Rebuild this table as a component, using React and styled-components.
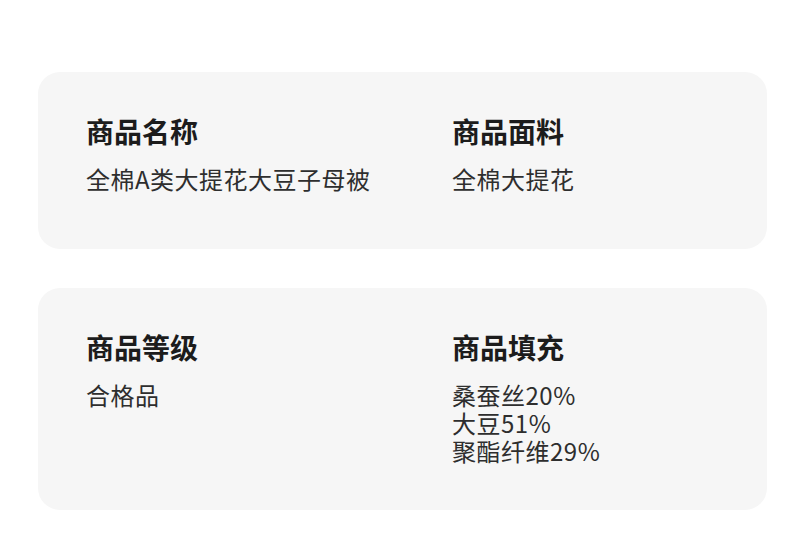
import React from 'react'
import styled, { createGlobalStyle } from 'styled-components'

const GlobalStyle = createGlobalStyle`
  html, body {
    margin: 0;
    padding: 0;
    background: #ffffff;
  }
  body {
    font-family: "Noto Sans CJK SC", "Noto Sans", sans-serif;
  }
`

const Page = styled.main`
  width: 790px;
  padding: 72px 23px 28px 38px;
  box-sizing: border-box;
  display: flex;
  flex-direction: column;
  gap: 39px;
`

const Card = styled.section`
  background: #f6f6f6;
  border-radius: 22px;
  padding: 39px 48px 45px;
  min-height: ${(props) => props.minHeight || 0}px;
  box-sizing: border-box;
  display: grid;
  grid-template-columns: 366px 1fr;
`

const Field = styled.div`
  display: flex;
  flex-direction: column;
  gap: 14px;
`

const Label = styled.h3`
  margin: 0;
  font-size: 28px;
  line-height: 40px;
  font-weight: 700;
  color: #1c1c1c;
`

const Value = styled.div`
  font-size: 24px;
  line-height: 28px;
  letter-spacing: 0.5px;
  color: #2e2e2e;
`

const cards = [
  {
    minHeight: 177,
    fields: [
      { label: '商品名称', value: ['全棉A类大提花大豆子母被'] },
      { label: '商品面料', value: ['全棉大提花'] },
    ],
  },
  {
    minHeight: 222,
    fields: [
      { label: '商品等级', value: ['合格品'] },
      { label: '商品填充', value: ['桑蚕丝20%', '大豆51%', '聚酯纤维29%'] },
    ],
  },
]

const App = () => (
  <>
    <GlobalStyle />
    <Page>
      {cards.map((card) => (
        <Card key={card.fields[0].label} minHeight={card.minHeight}>
          {card.fields.map((f) => (
            <Field key={f.label}>
              <Label>{f.label}</Label>
              <Value>
                {f.value.map((line) => (
                  <div key={line}>{line}</div>
                ))}
              </Value>
            </Field>
          ))}
        </Card>
      ))}
    </Page>
  </>
)

export default App
